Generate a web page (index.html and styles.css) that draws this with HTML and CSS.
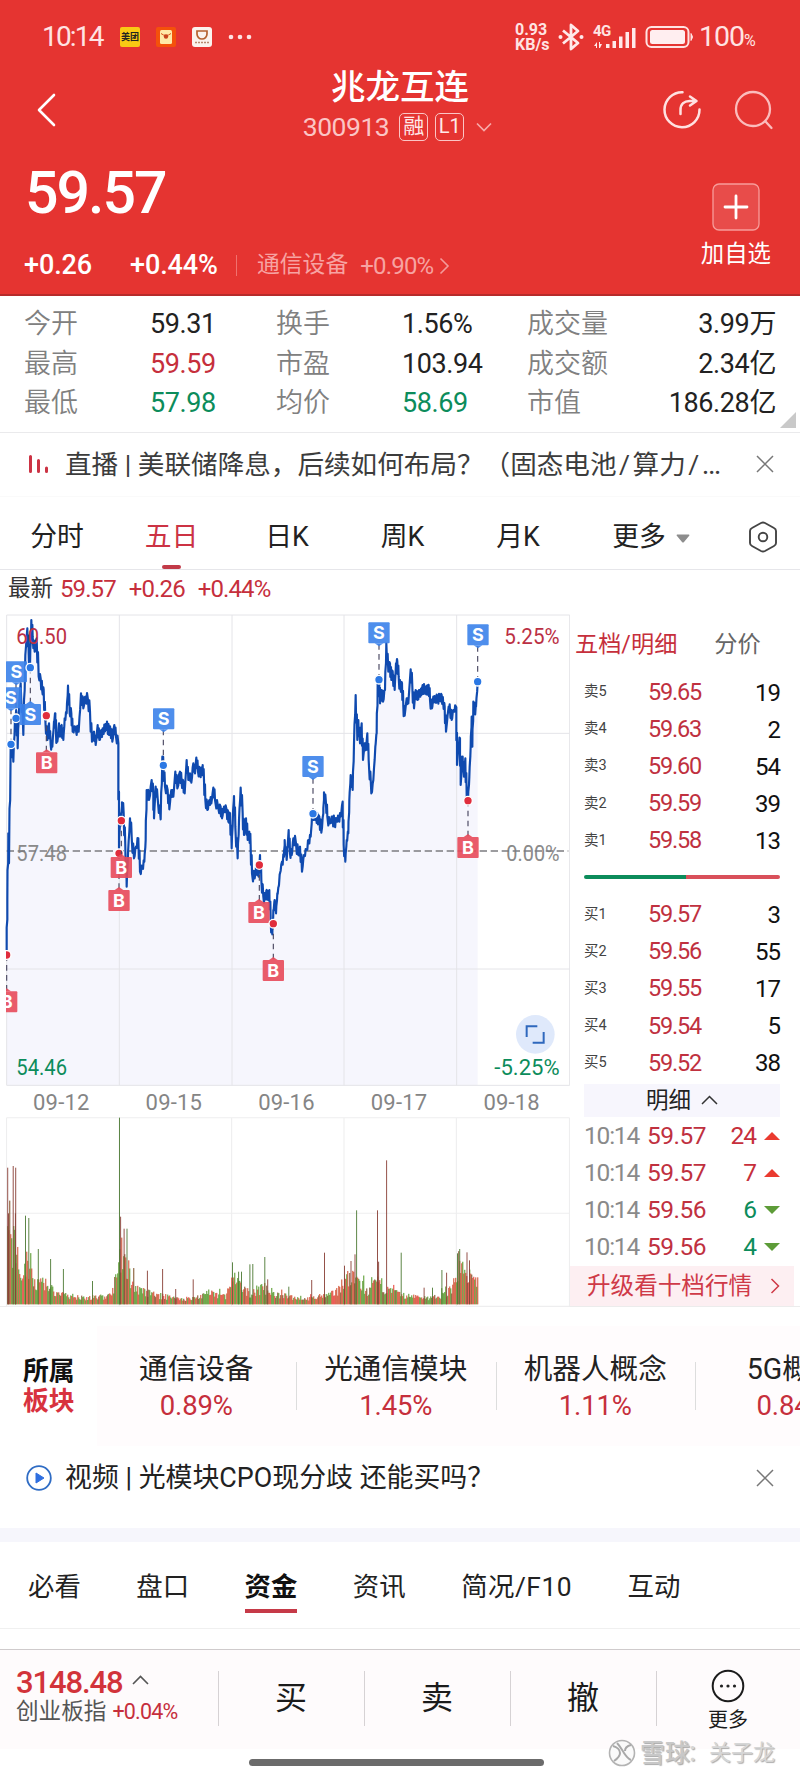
FILE: index.html
```html
<!DOCTYPE html>
<html lang="zh-CN">
<head>
<meta charset="utf-8">
<title>兆龙互连 300913</title>
<link rel="stylesheet" href="styles.css">
</head>
<body>
<header class="header">
  <div class="status">
    <span class="clock">10:14</span>
    <span class="app app-mt">美团</span>
    <svg class="app" width="20" height="20" viewBox="0 0 20 20"><rect width="20" height="20" rx="2" fill="#f4510b"/><rect x="4" y="3" width="12" height="14" rx="1.500" fill="#ffe9a8"/><path d="M5 6.500q5 4 10 0" stroke="#d8531c" fill="none"/><circle cx="10" cy="9.500" r="2.200" fill="#c8431c"/></svg>
    <svg class="app" width="20" height="20" viewBox="0 0 20 20"><rect width="20" height="20" rx="3" fill="#fbf3ee"/><path d="M5 4h10v3a5 5 0 0 1-10 0z" fill="none" stroke="#b5622f" stroke-width="1.700"/><path d="M3 15.500h14" stroke="#b98a70" stroke-width="1.300" stroke-dasharray="2 1"/></svg>
    <svg class="dots" width="24" height="6" viewBox="0 0 24 6"><g fill="#ffe3e3"><circle cx="3" cy="3" r="2.300"/><circle cx="12" cy="3" r="2.300"/><circle cx="21" cy="3" r="2.300"/></g></svg>
    <span class="speed">0.93<br>KB/s</span>
    <svg class="bt" width="26" height="28" viewBox="0 0 26 28"><path d="M5 7.500 20 20l-7 6V2l7 6L5 20.500" fill="none" stroke="#ffe9ea" stroke-width="2.800" stroke-linejoin="round"/><circle cx="2.500" cy="14" r="2" fill="#ffe9ea"/><circle cx="23.500" cy="14" r="2" fill="#ffe9ea"/></svg>
    <span class="net"><span class="g4">4G</span>
      <svg width="44" height="24" viewBox="0 0 44 24"><g fill="#ffe9ea"><path d="M1 21l3-4v6H3v-2zM6 23v-6h1v2h2l-2 4z"/><rect x="13" y="19" width="3.500" height="4"/><rect x="19.500" y="16" width="3.500" height="7"/><rect x="26" y="11.500" width="3.500" height="11.500"/><rect x="32.500" y="7" width="3.500" height="16"/><rect x="39" y="3" width="3.500" height="20"/></g></svg></span>
    <svg class="battery" width="50" height="24" viewBox="0 0 50 24"><rect x="1.500" y="2" width="42" height="20" rx="5" fill="none" stroke="#ffe3e3" stroke-width="2"/><rect x="5" y="5" width="35" height="14" rx="2.500" fill="#ffeef0"/><path d="M46 8.500q3 3.500 0 7z" fill="#ffe3e3" stroke="#ffe3e3"/></svg>
    <span class="pct">100<small>%</small></span>
  </div>
  <div class="nav">
    <svg class="back" width="20" height="34" viewBox="0 0 20 34"><path d="M17 2 2 17l15 15" fill="none" stroke="#fff" stroke-width="2.600" stroke-linecap="round" stroke-linejoin="round"/></svg>
    <div class="titles">
      <h1>兆龙互连</h1>
      <div class="code"><span>300913</span><b>融</b><b class="l1">L1</b><svg width="16" height="10" viewBox="0 0 16 10"><path d="M1 1.500l7 7 7-7" fill="none" stroke="#f7a9a8" stroke-width="1.700"/></svg></div>
    </div>
    <svg class="share" width="40" height="40" viewBox="0 0 40 40"><g fill="none" stroke="#ffe1e1" stroke-width="2.500" stroke-linecap="round" stroke-linejoin="round"><path d="M20.500 2.200A17.500 17.500 0 1 0 37.500 19.500"/><path d="M18.500 24v-4c0-6 4-9 9-9h6M28 6.500l6.500 4.500-6.500 4.500"/></g></svg>
    <svg class="search" width="40" height="40" viewBox="0 0 40 40"><g fill="none" stroke="#fbbcbc" stroke-width="2.300" stroke-linecap="round"><circle cx="19" cy="19" r="17"/><path d="M31.500 31.500l6 6.500"/></g></svg>
  </div>
  <div class="quote">
    <div>
      <div class="price">59.57</div>
      <div class="chg"><b>+0.26</b><b class="c2">+0.44%</b><i></i><span>通信设备</span><span class="ind">+0.90%</span><svg width="11" height="18" viewBox="0 0 11 18"><path d="M1.500 1.500 9 9l-7.500 7.500" fill="none" stroke="#f49b9a" stroke-width="1.600"/></svg></div>
    </div>
    <div class="add">
      <svg width="48" height="48" viewBox="0 0 48 48"><rect x="1" y="1" width="46" height="46" rx="6" fill="#fff" fill-opacity=".12" stroke="#f79c9a" stroke-width="1.300"/><path d="M13 24h22M24 13v22" stroke="#fff" stroke-width="2.800" stroke-linecap="round"/></svg>
      <span>加自选</span>
    </div>
  </div>
</header>

<section class="stats">
  <span>今开</span><b>59.31</b><span>换手</span><b>1.56%</b><span>成交量</span><b>3.99万</b>
  <span>最高</span><b class="red">59.59</b><span>市盈</span><b>103.94</b><span>成交额</span><b>2.34亿</b>
  <span>最低</span><b class="green">57.98</b><span>均价</span><b class="green">58.69</b><span>市值</span><b>186.28亿</b>
  <i class="corner"></i>
</section>

<section class="notice">
  <svg width="22" height="20" viewBox="0 0 22 20"><g stroke="#cc3344" stroke-width="3" stroke-linecap="round"><path d="M2.500 2.500v15M10.500 6.500v11M18.500 14v3.500"/></g></svg>
  <p>直播 | 美联储降息，后续如何布局？（固态电池<i class="slash">/</i>算力<i class="slash">/</i><i class="dotdot">…</i></p>
  <svg width="18" height="18" viewBox="0 0 18 18"><path d="M1 1l16 16M17 1 1 17" stroke="#777" stroke-width="1.500"/></svg>
</section>

<nav class="periods">
  <span>分时</span><span class="on">五日</span><span>日K</span><span>周K</span><span>月K</span>
  <span class="more">更多<svg width="14" height="9" viewBox="0 0 14 9"><path d="M1 .5h12q1 .5 0 1.500L8 8q-1 1-2 0L1 2Q0 1 1 .5z" fill="#8d8d8d"/></svg></span>
  <span class="gear"><svg width="30" height="32" viewBox="0 0 30 32"><g fill="none" stroke="#444" stroke-width="1.900"><path d="M13 2q2-1 4 0l9 5q2 1 2 3v12q0 2-2 3l-9 5q-2 1-4 0l-9-5q-2-1-2-3V10q0-2 2-3z"/><circle cx="15" cy="16" r="4.300"/></g></svg></span>
</nav>

<div class="latest"><span>最新</span><b>59.57</b><b>+0.26</b><b>+0.44%</b></div>

<main class="board">
  <div class="charts">
    <svg id="price" width="570" height="472" viewBox="0 42 1710 1416"></svg>
    <div class="dates"><span>09-12</span><span>09-15</span><span>09-16</span><span>09-17</span><span>09-18</span></div>
    <svg id="volume" width="570" height="190" viewBox="0 81 1567.5 570" preserveAspectRatio="none"></svg>
  </div>
  <aside class="book">
    <div class="book-tabs"><span class="red">五档/明细</span><span>分价</span></div>
    <div class="lv"><span>卖5</span><b>59.65</b><em>19</em></div>
    <div class="lv"><span>卖4</span><b>59.63</b><em>2</em></div>
    <div class="lv"><span>卖3</span><b>59.60</b><em>54</em></div>
    <div class="lv"><span>卖2</span><b>59.59</b><em>39</em></div>
    <div class="lv"><span>卖1</span><b>59.58</b><em>13</em></div>
    <div class="ratio"><i></i></div>
    <div class="lv"><span>买1</span><b>59.57</b><em>3</em></div>
    <div class="lv"><span>买2</span><b>59.56</b><em>55</em></div>
    <div class="lv"><span>买3</span><b>59.55</b><em>17</em></div>
    <div class="lv"><span>买4</span><b>59.54</b><em>5</em></div>
    <div class="lv"><span>买5</span><b>59.52</b><em>38</em></div>
    <div class="detail">明细<svg width="17" height="10" viewBox="0 0 17 10"><path d="M1 9l7.500-7.500L16 9" fill="none" stroke="#333" stroke-width="1.500"/></svg></div>
    <div class="tick"><span>10:14</span><b>59.57</b><em class="red">24</em><i class="up"></i></div>
    <div class="tick"><span>10:14</span><b>59.57</b><em class="red">7</em><i class="up"></i></div>
    <div class="tick"><span>10:14</span><b>59.56</b><em class="green">6</em><i class="down"></i></div>
    <div class="tick"><span>10:14</span><b>59.56</b><em class="green">4</em><i class="down"></i></div>
    <div class="upgrade"><span>升级看十档行情</span><svg width="10" height="16" viewBox="0 0 10 16"><path d="M1.500 1 8.500 8l-7 7" fill="none" stroke="#cf3a48" stroke-width="1.500"/></svg></div>
  </aside>
</main>

<section class="sectors">
  <div class="belong"><span>所属</span><span class="plate">板块</span></div>
  <div class="sector-list">
    <div><span>通信设备</span><b>0.89%</b></div>
    <div><span>光通信模块</span><b>1.45%</b></div>
    <div><span>机器人概念</span><b>1.11%</b></div>
    <div><span>5G概念</span><b>0.84%</b></div>
  </div>
</section>

<section class="notice video">
  <svg width="26" height="26" viewBox="0 0 26 26"><circle cx="13" cy="13" r="11.800" fill="none" stroke="#2f6cc4" stroke-width="1.800"/><path d="M10 8l8 5-8 5z" fill="#2f6fe0" stroke="#2f6fe0" stroke-linejoin="round"/></svg>
  <p>视频 | 光模块CPO现分歧 还能买吗？</p>
  <svg width="18" height="18" viewBox="0 0 18 18"><path d="M1 1l16 16M17 1 1 17" stroke="#777" stroke-width="1.500"/></svg>
</section>

<nav class="tabs"><span>必看</span><span>盘口</span><span class="on">资金</span><span>资讯</span><span class="f10">简况/F10</span><span>互动</span></nav>

<footer class="bar">
  <div class="index">
    <div class="idx">3148.48<svg width="17" height="10" viewBox="0 0 17 10"><path d="M1 9l7.500-7.500L16 9" fill="none" stroke="#555" stroke-width="1.600"/></svg></div>
    <div class="idn">创业板指<b>+0.04%</b></div>
  </div>
  <div class="act">买</div><div class="act">卖</div><div class="act">撤</div>
  <div class="act other"><svg width="34" height="34" viewBox="0 0 34 34"><circle cx="17" cy="17" r="15.300" fill="none" stroke="#1b1b1b" stroke-width="2"/><g fill="#222"><circle cx="10.500" cy="17" r="1.600"/><circle cx="17" cy="17" r="1.600"/><circle cx="23.500" cy="17" r="1.600"/></g></svg><span>更多</span></div>
</footer>
<div class="home"><i></i></div>
<div class="mark"><svg width="28" height="28" viewBox="0 0 28 28"><circle cx="14" cy="14" r="12.500" fill="#fafafa" stroke="#b3b3b3" stroke-width="1.600"/><path d="M5 7c4 1 7 4 7 7s-3 6-6 8M9 4c3 3 5 7 7 10s4 6 7 7M23 6c-4 1-6 3-6 6" fill="none" stroke="#a8a8a8" stroke-width="2"/></svg><b>雪球</b><span>：关子龙</span></div>
<script src="chart.js"></script>
</body>
</html>
```
FILE: styles.css
```css
* { box-sizing: border-box; }
body { margin: 0; width: 800px; height: 1778px; position: relative; overflow: hidden; background: #fff; color: #222; font-family: Roboto, "Noto Sans CJK SC", sans-serif; font-size: 26.5px; line-height: 1; }
b, em, i, h1, p { font-weight: 400; font-style: normal; margin: 0; }
svg { display: block; flex: none; }
.red { color: #c62f3c !important; }
.green { color: #0c8c5b !important; }

.header { height: 296px; background: #e53431; color: #fff; border-bottom: 2px solid #b62b2b; }
.status { height: 66px; padding: 8px 0 0 42px; display: flex; align-items: center; color: #ffe3e3; }
.clock { width: 78px; font-size: 28px; letter-spacing: -1.8px; }
.app { width: 20px; margin-right: 16px; }
.app-mt { height: 20px; background: #f9c914; border-radius: 2px; color: #222; font-size: 9px; font-weight: 700; line-height: 20px; text-align: center; }
.dots { margin-right: 263px; }
.speed { width: 43px; font-size: 16px; line-height: 15px; font-weight: 700; }
.bt { margin-right: 8px; }
.net { position: relative; width: 54px; height: 24px; padding-left: 1px; }
.g4 { position: absolute; left: 1px; top: -1px; font-size: 15px; font-weight: 700; letter-spacing: -.5px; }
.battery { margin: 0 4px 0 -1px; }
.pct { font-size: 28.5px; letter-spacing: -1px; }
.pct small { font-size: 16px; }
.nav { height: 80px; display: grid; grid-template-columns: 85px 1fr 40px 40px; column-gap: 32px; padding: 0 30px 0 37px; align-items: center; }
.back { margin-top: 7px; }
.titles { display: flex; flex-direction: column; align-items: center; margin-left: 16px; width: 460px; }
.titles h1 { height: 42px; line-height: 42px; font-size: 34.5px; font-weight: 500; }
.code { height: 38px; display: flex; align-items: center; font-size: 26.5px; letter-spacing: -.5px; color: #fbc5c5; margin-left: -5px; }
.code b { height: 28px; width: 29px; margin-left: 10px; border: 1.5px solid #fbc5c5; border-radius: 5px; font-size: 21px; line-height: 25px; text-align: center; color: #ffe9e9; letter-spacing: 0; }
.code .l1 { margin-left: 7px; font-size: 20px; }
.code svg { margin-left: 12px; }
.share, .search { margin-top: 8px; }
.quote { height: 148px; display: flex; justify-content: space-between; padding: 0 29px 0 24px; }
.price { height: 92px; line-height: 94px; font-size: 59px; font-weight: 500; letter-spacing: -2px; padding-left: 1px; }
.chg { height: 54px; padding-top: 1px; display: flex; align-items: center; font-size: 27px; color: #f7a3a2; }
.chg b { font-weight: 500; color: #fff; letter-spacing: -.1px; width: 106px; }
.chg .c2 { width: 106px; }
.chg i { width: 1px; height: 21px; background: #f0716f; margin-right: 20px; }
.chg span { font-size: 22.8px; }
.chg .ind { font-size: 24px; margin: 0 6px 0 12px; letter-spacing: -.8px; }
.add { padding-top: 37px; display: flex; flex-direction: column; align-items: center; font-size: 23.4px; }
.add span { margin-top: 12px; }

.stats { position: relative; height: 137px; padding: 9px 24px 0 24px; display: grid; grid-template-columns: 126px 125px 127px 124px 124px 1fr; grid-auto-rows: 39.4px; align-items: center; border-bottom: 1px solid #eaeaec; }
.stats span { color: #808080; font-weight: 350; font-size: 27px; white-space: nowrap; }
.stats span:nth-of-type(3n+2), .stats span:nth-of-type(3n) { padding-left: 1px; }
.stats b { font-size: 27px; white-space: nowrap; letter-spacing: -.4px; }
.stats b:nth-of-type(3n) { text-align: right; }
.corner { position: absolute; right: 4px; bottom: 4px; border: 8px solid; border-color: transparent #c9c9c9 #c9c9c9 transparent; }

.notice { height: 64px; padding: 0 26px 1px 28px; display: flex; align-items: center; color: #3c3c3c; border-bottom: 1px solid #fafafa; }
.notice p { flex: 1; margin-left: 15px; font-size: 26.6px; white-space: nowrap; }
.slash { padding: 0 2.5px; }
.dotdot { letter-spacing: 3px; font-size: 29px; }
.periods { height: 73px; display: grid; grid-template-columns: 114px 115px 116px 115px 116px 150px 74px; align-items: center; justify-items: center; border-bottom: 1px solid #e6e6ea; padding-top: 6px; font-size: 26.8px; }
.periods span { height: 66px; padding-top: 2px; display: flex; align-items: center; }
.periods .on { color: #cc3344; position: relative; }
.periods .on::after { content: ""; position: absolute; left: 17px; bottom: 0; width: 19px; height: 4px; border-radius: 2px; background: #c23a48; }
.more svg { margin-left: 10px; margin-top: 2px; }
.latest { height: 44px; padding: 0 0 7px 8px; display: flex; align-items: center; font-size: 22.5px; color: #333; }
.latest b { color: #c62f3c; font-size: 24px; letter-spacing: -.9px; margin-left: 7px; }
.latest b + b { margin-left: 13px; }

.board { height: 693px; display: flex; border-bottom: 1px solid #ececec; }
.charts { width: 570px; }
.dates { height: 31px; padding: 2px 0 0 5px; display: grid; grid-template-columns: repeat(5, 112.6px); align-items: center; text-align: center; font-size: 22px; letter-spacing: .2px; color: #858585; }
.book { width: 224px; display: flex; flex-direction: column; }
.book-tabs { height: 59px; padding: 2px 0 0 5px; display: flex; align-items: center; font-size: 23.2px; color: #666; gap: 37px; }
.lv { height: 37.1px; display: grid; grid-template-columns: 64px 1fr auto; align-items: center; padding: 2px 14px 0; }
.lv span { font-size: 14.5px; color: #444; }
.lv b { color: #c0313f; font-size: 23.5px; letter-spacing: -1.2px; }
.lv b, .tick b { white-space: nowrap; }
.lv em { font-size: 24px; letter-spacing: -1px; color: #111; }
.ratio { height: 37px; padding: 17px 14px; }
.ratio i { display: block; height: 4px; border-radius: 2px; background: linear-gradient(90deg, #0c8c5b 52%, #d9505a 52%); }
.detail { height: 33px; margin: 3px 14px 0; background: #f7f6fd; display: flex; align-items: center; justify-content: center; gap: 10px; font-size: 22.5px; color: #222; }
.tick { height: 37px; display: grid; grid-template-columns: 63px 60px 1fr 24px; align-items: center; padding: 2px 14px 0 14px; font-size: 24.5px; letter-spacing: -.5px; }
.tick span { color: #8a8a8a; letter-spacing: -1.2px; }
.tick b { color: #c0313f; }
.tick em { text-align: right; letter-spacing: -1px; }
.tick i { justify-self: end; border: 8px solid transparent; border-top-width: 0; border-bottom: 8px solid #ea3b30; }
.tick .down { border-bottom: 0; border-top: 8px solid #5d9c38; }
.upgrade { height: 40px; margin-top: 1px; padding: 1px 14px 0 17px; display: flex; align-items: center; justify-content: space-between; background: #fdeff2; color: #cf3a48; font-size: 23.6px; }

.sectors { height: 140px; display: flex; overflow: hidden; }
.belong { flex: none; width: 96.5px; padding: 50px 0 0 23px; font-size: 25.8px; line-height: 29.5px; font-weight: 700; color: #111; display: flex; flex-direction: column; }
.plate { color: #d8323e; }
.sector-list { display: flex; flex: none; margin-top: 19px; height: 120px; background: #fffcfd; }
.sector-list div { position: relative; width: 199.5px; flex: none; padding-top: 24px; display: flex; flex-direction: column; align-items: center; font-size: 28.6px; line-height: 38px; color: #222; }
.sector-list div + div::before { content: ""; position: absolute; left: 0; top: 36px; height: 48px; width: 1px; background: #ddd; }
.sector-list div:last-child { width: 196px; }
.sector-list b { font-size: 27.5px; line-height: 36px; color: #c62f3c; letter-spacing: -.2px; }
.video { height: 81px; padding: 0 26px 19px 26px; border: 0; color: #222; }
.video p { margin-left: 13px; font-size: 26.9px; }
.tabs { height: 101px; border-top: 14px solid #f6f6fc; border-bottom: 1px solid #f0f0f0; padding: 0 28px; display: flex; gap: 55.5px; font-size: 26.4px; color: #222; }
.tabs span { height: 71px; line-height: 90px; white-space: nowrap; }
.tabs .on { font-weight: 700; color: #111; border-bottom: 4px solid #c63a48; }
.tabs .f10 { letter-spacing: .5px; }

.bar { height: 100px; margin-top: 20px; border-top: 1px solid #cfcbcc; background: #fefbfc; display: grid; grid-template-columns: 218px 146px 146px 146px 144px; }
.index { padding: 16px 0 0 16px; }
.idx { display: flex; align-items: center; gap: 9px; font-size: 31px; letter-spacing: -1.1px; color: #d2333a; height: 33px; font-weight: 500; }
.idx svg { margin-top: -5px; }
.idn { height: 26px; display: flex; align-items: center; font-size: 22.6px; color: #555; white-space: nowrap; }
.idn b { margin-left: 6px; font-size: 21.5px; letter-spacing: -.8px; color: #c62f3c; }
.act { position: relative; height: 96px; display: flex; align-items: center; justify-content: center; font-size: 32px; color: #1b1b1b; }
.act::before { content: ""; position: absolute; left: 0; top: 21px; width: 1px; height: 55px; background: #d6d2d4; }
.other { height: 98px; flex-direction: column; font-size: 20px; gap: 7px; }
.home { height: 29px; display: flex; padding: 10px 0 0 249px; }
.home i { width: 295px; height: 7px; border-radius: 4px; background: #6b6b6b; }
.mark { position: absolute; left: 608px; top: 1739px; display: flex; align-items: center; font-size: 22px; color: #c8c8c8; text-shadow: 1px 1px 1px #aaa; }
.mark b { font-size: 25px; margin-left: 4px; font-weight: 500; }
.mark span { margin-left: -3px; color: #d6d6d6; }
```
FILE: chart.js
```js
// Price line: x and y pairs in third-of-a-pixel chart units.
const line = `20,1050 22,900 25,700 27,790 32,440 35,430 40,485 45,350 50,340 53,445 58,300 62,250 70,405 76,165 82,85 86,160 90,200 94,60 98,110 104,155 110,115 116,230 122,235 127,275 131,268 136,360 142,420 147,370 152,435 157,440 162,365 166,340 168,400 172,425 177,370 180,410 185,375 190,420 194,355 200,340 204,257 209,340 214,340 218,395 226,380 236,395 243,280 250,325 256,290 264,300 270,335 276,425 282,395 287,435 293,375 298,420 304,390 310,400 314,380 318,390 322,372 327,405 331,385 337,425 343,375 348,410 355,430 357,750 360,640 364,660 366,607 371,640 376,740 380,860 384,760 390,655 395,710 402,775 408,740 415,715 420,815 427,800 433,785 437,720 440,570 447,600 455,540 460,580 462,655 467,560 473,595 482,658 487,470 490,496 495,560 503,570 508,628 514,570 520,590 526,515 532,565 540,515 545,550 550,545 554,580 560,480 565,540 570,520 574,548 580,490 585,520 589,473 594,515 600,510 606,525 608,495 612,540 616,600 622,630 628,600 634,610 640,563 645,600 655,625 662,620 666,655 672,620 680,630 685,665 690,640 695,745 699,640 702,588 706,680 713,775 717,660 722,563 728,640 732,705 738,655 743,720 748,695 752,740 756,820 764,835 770,790 776,830 780,765 784,840 790,890 796,895 800,870 805,900 808,870 812,960 817,1003 820,930 824,900 828,940 832,880 836,860 840,820 846,785 852,770 854,720 860,780 866,690 870,760 875,765 880,715 888,730 895,765 900,740 906,815 912,765 920,750 926,720 932,710 936,650 940,640 944,650 950,640 952,665 958,650 964,698 970,640 972,577 978,610 982,650 990,670 998,650 1003,675 1010,655 1016,655 1022,650 1028,605 1031,735 1036,785 1040,720 1045,700 1048,600 1052,525 1058,570 1062,430 1067,285 1072,420 1075,360 1080,430 1085,370 1089,480 1094,430 1098,450 1102,400 1106,480 1114,580 1120,540 1126,440 1130,400 1133,250 1138,240 1140,310 1145,270 1149,305 1155,270 1159,130 1165,215 1170,190 1174,240 1178,215 1184,270 1188,190 1192,185 1196,230 1202,270 1206,250 1210,320 1214,347 1220,295 1225,310 1232,208 1237,260 1242,325 1247,270 1252,300 1260,270 1264,285 1268,255 1274,280 1278,260 1282,280 1286,255 1290,300 1296,325 1300,290 1306,305 1312,290 1320,300 1325,285 1330,315 1334,320 1338,395 1346,320 1350,330 1355,360 1360,330 1369,322 1371,495 1375,440 1380,415 1382,555 1388,470 1392,530 1396,475 1400,585 1404,600 1408,530 1412,440 1415,350 1417,440 1420,305 1425,340 1428,320 1433,245`
  .split(' ').map(p => p.split(',').map(Number));

let seed = 7;
const rnd = () => (seed = (seed * 16807) % 2147483647) / 2147483647;

const dense = [];
line.forEach((p, i) => {
  if (i) {
    const q = line[i - 1];
    const x = (p[0] + q[0]) / 2, y = (p[1] + q[1]) / 2;
    dense.push([x - 1, y + 8 + rnd() * 9], [x + 1, y - 8 - rnd() * 9]);
  }
  dense.push(p);
});
const path = 'M' + dense.map(p => p[0].toFixed(1) + ' ' + p[1].toFixed(1)).join('L');

const grid = (y1, y2, ym, xs, end) =>
  `<path stroke="#e4e4e8" stroke-width="3" fill="none" d="M${xs[0]} ${y1}H${end}M${xs[0]} ${y2}H${end}M${end} ${y1}V${y2}${ym.map(y => `M${xs[0]} ${y}H${end}`).join('')}${xs.map(x => `M${x} ${y1}V${y2}`).join('')}"/>`;

// marker: kind, centre x, box top, nib direction (1 = down, -1 = up), dot x and y
const marks = [
  ['S', 49, 184, 1, 48, 355], ['S', 33, 262, 1, 33, 433], ['S', 91, 312, -1, 91, 203],
  ['S', 491, 325, 1, 490, 496], ['S', 939, 468, 1, 939, 641], ['S', 1137, 67, 1, 1137, 239],
  ['S', 1434, 73, 1, 1433, 245], ['B', 20, 1174, -1, 20, 1065], ['B', 140, 457, -1, 139, 347],
  ['B', 357, 870, -1, 357, 760], ['B', 364, 771, -1, 364, 662], ['B', 777, 906, -1, 778, 795],
  ['B', 820, 1080, -1, 820, 971], ['B', 1404, 711, -1, 1404, 602]
];
const mark = ([k, x, y, dir, dx, dy]) => {
  const c = k === 'S' ? '#3b82ea' : '#e84a5a';
  const edge = dir > 0 ? y + 63 : y;
  return `<path d="M${dx} ${dy}V${edge}" stroke="#4c4a63" stroke-width="3.5" stroke-dasharray="17 13"/>
  <rect x="${x - 32}" y="${y}" width="64" height="63" rx="3" fill="${c}" fill-opacity=".9"/>
  <path d="M${x - 13} ${edge}l13 ${9 * dir} 13 ${-9 * dir}z" fill="${c}" fill-opacity=".9"/>
  <text x="${x}" y="${y + 51}" text-anchor="middle" font-size="54" font-weight="700" fill="#fff" font-family="Inter">${k}</text>
  <circle cx="${dx}" cy="${dy}" r="13" fill="${k === 'S' ? '#2b78e4' : '#e02d3c'}" stroke="#fff" stroke-width="4"/>`;
};
const label = (x, y, t, c, a) =>
  `<text x="${x}" y="${y}" font-size="64" textLength="${a[1]}" lengthAdjust="spacingAndGlyphs" text-anchor="${a[0]}" fill="${c}">${t}</text>`;

document.getElementById('price').innerHTML =
  `<clipPath id="plot"><rect x="18" y="42" width="1692" height="1416"/></clipPath>
  <path d="${path}V1456H20z" fill="#f6f6fd"/>
  ${grid(45, 1456, [400, 1107], [20, 358, 696, 1032, 1370], 1709)}
  ${label(49, 783, '57.48', '#8a8a8a', ['start', 152])}
  ${label(1679, 783, '0.00%', '#8a8a8a', ['end', 160])}
  <path d="M20 753H1705" stroke="#7c7c80" stroke-width="4" stroke-dasharray="22 11"/>
  <path d="${path}" fill="none" stroke="#0f4aaf" stroke-width="6.5" stroke-linejoin="round"/>
  ${label(49, 131, '60.50', '#bb3044', ['start', 152])}
  ${label(49, 1424, '54.46', '#0c8c5b', ['start', 152])}
  ${label(1679, 131, '5.25%', '#bb3044', ['end', 166])}
  ${label(1679, 1424, '-5.25%', '#0c8c5b', ['end', 196])}
  <g clip-path="url(#plot)">${marks.map(mark).join('')}</g>
  <circle cx="1606" cy="1303" r="58" fill="#dfe9fb"/>
  <path d="M1612 1279h-32v32M1598 1328h33v-32" fill="none" stroke="#2f68bd" stroke-width="6"/>`;

// Volume: typical height along the time axis, then single tall bars.
const env = [[20, 240], [45, 190], [60, 75], [70, 160], [90, 80], [130, 65], [160, 34], [250, 22], [300, 30], [320, 90], [330, 190], [350, 110], [380, 48], [450, 27], [520, 17], [570, 38], [620, 30], [640, 90], [680, 36], [725, 60], [760, 32], [850, 20], [920, 38], [945, 85], [980, 90], [1010, 42], [1040, 80], [1065, 50], [1110, 30], [1200, 22], [1240, 50], [1262, 135], [1290, 85], [1318, 75]];
const tall = [[21, 233, 0], [36, 228, 0], [43, 233, 0], [23, 370, 0], [42, 370, 0], [70, 377, 1], [79, 384, 1], [105, 477, 1], [139, 507, 1], [174, 537, 1], [254, 573, 1], [328.5, 83, 1], [331.5, 380, 0], [341, 416, 0], [349, 416, 1], [405, 542, 0], [447, 537, 0], [483, 597, 0], [531, 568, 0], [639, 517, 1], [656, 545, 1], [664, 545, 1], [687, 523, 1], [695, 522, 1], [728, 501, 1], [736, 568, 0], [794, 590, 1], [857, 570, 0], [892, 488, 0], [947, 527, 0], [965, 513, 0], [976, 493, 0], [980.5, 361, 1], [1038, 361, 0], [1041, 515, 0], [1063, 211, 0], [1103, 488, 1], [1166, 593, 0], [1189, 593, 1], [1215, 540, 1], [1228, 548, 0], [1258, 490, 1], [1264, 477, 1], [1284, 487, 0], [1291, 511, 0]];
const at = x => {
  const i = Math.max(1, env.findIndex(e => e[0] >= x));
  const [a, b] = [env[i - 1], env[i]];
  return a[1] + (b[1] - a[1]) * (x - a[0]) / (b[0] - a[0]);
};
let bars = '';
for (let x = 20; x < 1315; x += 2.75) {
  const h = at(x) * (0.5 + rnd() * 0.65 + (rnd() > 0.9 ? 0.4 : 0));
  const r = rnd();
  const c = r < 0.4 ? '#d0482a' : r < 0.8 ? '#4f9422' : r < 0.9 ? '#7a4a20' : '#e8372f';
  bars += `<rect x="${x.toFixed(1)}" y="${(643 - h).toFixed(1)}" width="2.75" height="${h.toFixed(1)}" fill="${c}"/>`;
}
tall.forEach(([x, y, g]) => {
  bars += `<rect x="${x - 1}" y="${y}" width="2.5" height="${643 - y}" fill="${g ? '#4d7a35' : '#8a4038'}"/>`;
});
document.getElementById('volume').innerHTML =
  grid(83, 649, [370], [18, 328, 637, 946, 1255], 1566).replaceAll('#e4e4e8', '#eeeeef') + bars;
```
